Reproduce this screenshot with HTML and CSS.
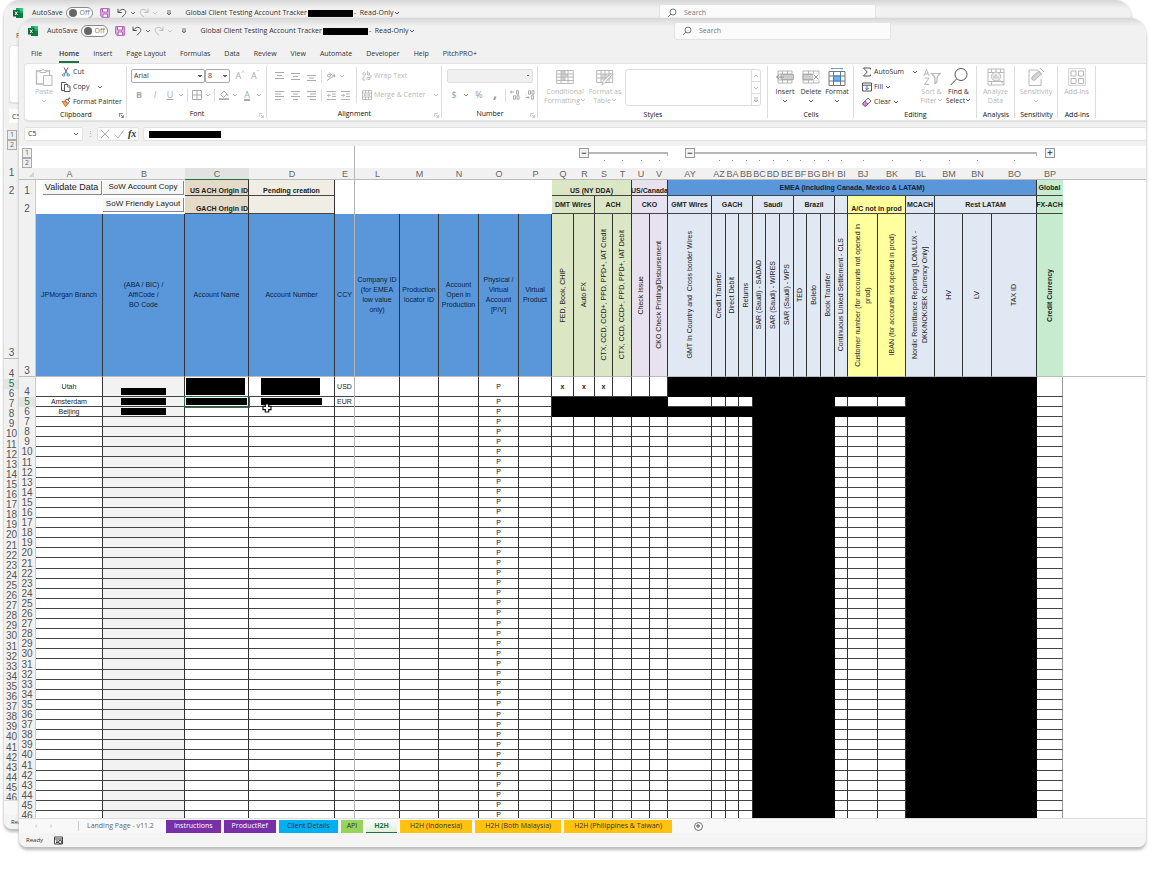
FILE: index.html
```html
<!DOCTYPE html>
<html lang="en">
<head>
<meta charset="utf-8">
<title>Global Client Testing Account Tracker</title>
<link rel="stylesheet" href="styles.css">
</head>
<body>
<svg class="sprite" aria-hidden="true">
  <symbol id="excel" viewBox="0 0 10 10"><path d="M3 0h7v10H3z" fill="#21a366"/><path d="M6.500 0H10v3.300H6.500z" fill="#33c481"/><path d="M3 5h7v5H3z" fill="#107c41"/><path d="M0 2h6.500v6.500H0z" fill="#0b6b38"/><path d="M2 3.500l2.500 3.500M4.500 3.500L2 7" stroke="#fff" stroke-width="1"/></symbol>
  <symbol id="save" viewBox="0 0 10 10"><path d="M.7.7h8.600v8.600H2L.7 8z" fill="#e6b8e8" stroke="#b05ab6"/><path d="M2.500.7h5v3.300h-5z" fill="#fff" stroke="#b05ab6"/><path d="M3 6h4.500v3.300H3z" fill="#fff" stroke="#b05ab6"/></symbol>
  <symbol id="undo" viewBox="0 0 10 10"><path d="M1 .8v3.700h3.800M1.200 4.300C3 2 5 .8 7 1.600c2.400 1 2.200 3.300.8 4.700L5 9.300" fill="none" stroke="currentColor"/></symbol>
  <symbol id="redo" viewBox="0 0 10 10"><path d="M9 .8v3.700H5.200M8.800 4.300C7 2 5 .8 3 1.600.6 2.600.8 4.900 2.200 6.300L5 9.300" fill="none" stroke="currentColor"/></symbol>
  <symbol id="chev" viewBox="0 0 6 6"><path d="M1 2l2 2 2-2" fill="none" stroke="currentColor" stroke-width=".8"/></symbol>
  <symbol id="chevup" viewBox="0 0 6 6"><path d="M1 4l2-2 2 2" fill="none" stroke="currentColor" stroke-width=".8"/></symbol>
  <symbol id="more" viewBox="0 0 6 6"><path d="M1 1h4M1 3l2 2 2-2z" fill="none" stroke="currentColor" stroke-width=".8"/></symbol>
  <symbol id="glass" viewBox="0 0 10 10"><circle cx="6" cy="4" r="3" fill="none" stroke="currentColor"/><path d="M4 6L1 9" stroke="currentColor"/></symbol>
  <symbol id="launch" viewBox="0 0 6 6"><path d="M.5 4.500v-4h4M2 2l3 3M5.300 2.500v2.800H2.500" fill="none" stroke="currentColor" stroke-width=".9"/></symbol>
  <symbol id="paste" viewBox="0 0 18 18"><path d="M5 3H1.500v13H8M11 3h3.500v4" fill="none" stroke="currentColor" stroke-width="1.300"/><path d="M5 4.500V2.500h1.500Q8 0 9.500 2.500H11v2z" fill="#fff" stroke="currentColor"/><path d="M8.500 7.500h8.500v10H8.500z" fill="#fafafa" stroke="currentColor"/></symbol>
  <symbol id="cut" viewBox="0 0 8 10"><path d="M2 .5l3.500 6.500M6 .5L2.500 7" stroke="#666" fill="none"/><circle cx="1.800" cy="8" r="1.200" fill="none" stroke="#3b8fd0"/><circle cx="6.200" cy="8" r="1.200" fill="none" stroke="#3b8fd0"/></symbol>
  <symbol id="copy" viewBox="0 0 10 10"><path d="M3.500 8.500H.5v-8h4l1 1" fill="none" stroke="#555"/><path d="M3.500 2.500h3.500l2 2v5H3.500z" fill="#fff" stroke="#555"/><path d="M6.500 2.500v2.500H9" fill="none" stroke="#555" stroke-width=".7"/></symbol>
  <symbol id="painter" viewBox="0 0 10 10"><path d="M1 4.500l3.500-.5L7 6.500 4.500 9.500z" fill="#f0a35a" stroke="#d9762b"/><path d="M4 3.500l2-1.500L8.500 4.500 7 6.500z" fill="#fff" stroke="#666"/><path d="M6.500 3L9 .7" stroke="#666" stroke-width="1.500"/></symbol>
  <symbol id="border" viewBox="0 0 10 10"><path d="M.5.5h9v9h-9zM5 .5v9M.5 5h9" fill="none" stroke="currentColor"/></symbol>
  <symbol id="fill" viewBox="0 0 10 10"><path d="M1.500 4.500L5 1l3 3-3.500 3.500zM8 4l1.300 2" fill="none" stroke="currentColor"/><path d="M0 8.300h10V10H0z" fill="currentColor"/></symbol>
  <symbol id="atop" viewBox="0 0 9 9"><path d="M0 .5h9M2 3.500h5M0 6.500h9" stroke="currentColor"/></symbol>
  <symbol id="amid" viewBox="0 0 9 9"><path d="M0 1.500h9M2 4.500h5M0 7.500h9" stroke="currentColor"/></symbol>
  <symbol id="abot" viewBox="0 0 9 9"><path d="M0 3.500h9M2 6h5M0 8.500h9" stroke="currentColor"/></symbol>
  <symbol id="aleft" viewBox="0 0 9 9"><path d="M0 .5h9M0 3h6M0 5.500h9M0 8.500h6" stroke="currentColor"/></symbol>
  <symbol id="acen" viewBox="0 0 9 9"><path d="M0 .5h9M2 3h5M0 5.500h9M2 8.500h5" stroke="currentColor"/></symbol>
  <symbol id="aright" viewBox="0 0 9 9"><path d="M0 .5h9M3 3h6M0 5.500h9M3 8.500h6" stroke="currentColor"/></symbol>
  <symbol id="outdent" viewBox="0 0 9 9"><path d="M0 .5h9M5 3h4M5 5.500h4M0 8.500h9M4 4.300H.5M2 2.800L.5 4.300 2 5.800" fill="none" stroke="currentColor" stroke-width=".9"/></symbol>
  <symbol id="indent" viewBox="0 0 9 9"><path d="M0 .5h9M5 3h4M5 5.500h4M0 8.500h9M0 4.300h3.500M2 2.800l1.500 1.500L2 5.800" fill="none" stroke="currentColor" stroke-width=".9"/></symbol>
  <symbol id="orient" viewBox="0 0 10 10"><circle cx="3" cy="4.500" r="1.500" fill="none" stroke="currentColor"/><path d="M3.500 1.500l3 3M1 9.500l8-5.500M9 4l-2.500.3M9 4L8 6.500" fill="none" stroke="currentColor"/></symbol>
  <symbol id="wrap" viewBox="0 0 10 10"><path d="M1 4V2q1.500-1.500 2.500 0v2H1.500M5.500 0v4h2V2h-2M3 6H1v3h2M5 9V6.500h3v2H6M9 4v2.500" fill="none" stroke="currentColor" stroke-width=".9"/></symbol>
  <symbol id="merge" viewBox="0 0 10 10"><path d="M.5.5h9v9h-9zM.5 3h9M.5 7h9M3.500.5V3M6.500.5V3M3.500 7v2.500M6.500 7v2.500M2 5h6M3.500 4L2 5l1.500 1M6.500 4L8 5 6.500 6" fill="none" stroke="currentColor" stroke-width=".9"/></symbol>
  <symbol id="decup" viewBox="0 0 10 10"><path d="M4 2H.5M2 .7L.5 2 2 3.300M6.500.7h2v3.500h-2zM3.500 5.700h2v3.500h-2zM7 5.700h2v3.500H7z" fill="none" stroke="currentColor" stroke-width=".8"/></symbol>
  <symbol id="decdown" viewBox="0 0 10 10"><path d="M3.500.7h2v3.500h-2zM7 .7h2v3.500H7zM1 4v.5M.5 7.500H4M2.700 6.200L4 7.500 2.700 8.800M6.500 5.700h2v3.500h-2z" fill="none" stroke="currentColor" stroke-width=".8"/></symbol>
  <symbol id="cond" viewBox="0 0 18 18"><path d="M5 3h4v10H5zM9 6h3v3H9z" fill="#cfcfcf"/><path d="M.7 2.500h16.600v13H.7zM.7 6h16.600M.7 9h16.600M.7 12.500h16.600M5 2.500v13M12 2.500v13M9 2.500v4M9 9v4" fill="none" stroke="currentColor"/></symbol>
  <symbol id="ftable" viewBox="0 0 18 18"><path d="M5 6h8v6H5z" fill="#d8d8d8"/><path d="M.7 2.500h16v12H.7zM.7 6h16M.7 10h16M5 2.500v12M9 2.500v12M13 2.500v12" fill="none" stroke="currentColor"/><path d="M16.500 6.500L8.500 15l-2.500 2 .8-3.500L15 5.500z" fill="#fff" stroke="currentColor"/></symbol>
  <symbol id="insert" viewBox="0 0 18 18"><path d="M2 3h14v12H2zM2 6h14M2 12h14M6.500 3v12M11.500 3v12" fill="none" stroke="#b4b4b4"/><path d="M5 6.500h12.500v5H5z" fill="#cdcdcd" stroke="#aaa"/><path d="M.5 9H8M3 7L.5 9 3 11" fill="none" stroke="#999"/></symbol>
  <symbol id="delete" viewBox="0 0 18 18"><path d="M1 3h16v12H1zM1 6h16M1 12h16M6.500 3v12M11.500 3v12" fill="none" stroke="#b4b4b4"/><path d="M1 6.500h11v5H1z" fill="#cdcdcd" stroke="#aaa"/><path d="M11 5.500h6.500v7H11z" fill="#fff"/><path d="M11.500 6.500l5 5M16.500 6.500l-5 5" stroke="#999"/></symbol>
  <symbol id="format" viewBox="0 0 18 18"><path d="M1 3.500h16v14H1zM1 8h16M1 13h16M5.500 3.500v14M12.500 3.500v14" fill="none" stroke="#777"/><path d="M5.500 8h7v5h-7z" fill="#6fb3ef" stroke="#2f80c8"/><path d="M3 .5h12M4-.5v2M14-.5v2" stroke="#3b8fd0" stroke-width=".8"/></symbol>
  <symbol id="sum" viewBox="0 0 9 10"><path d="M8 2.500V1H1l3.700 4L1 9h7V7.500" fill="none" stroke="#555"/></symbol>
  <symbol id="filld" viewBox="0 0 10 10"><path d="M.5 1h9v8h-9zM.5 3.200h9" fill="none" stroke="#555"/><path d="M5 3.500v4M3.300 6L5 7.700 6.700 6" fill="none" stroke="#2f80c8"/></symbol>
  <symbol id="eraser" viewBox="0 0 10 10"><path d="M1 6l5-5 3 3-5 5H2.500L1 7.500z" fill="#fff" stroke="#666"/><path d="M1 6l2-2 3 3-2 2H2.500L1 7.500z" fill="#d18ad6" stroke="#a848ae"/></symbol>
  <symbol id="sort" viewBox="0 0 18 18"><path d="M1 8l2.500-6.500L6 8M2 6h3M1.500 10H6l-4.500 6.500H6.200" fill="none" stroke="currentColor"/><path d="M8.500 5.500h8.500l-3 4v4.500l-2 1.500V9.500z" fill="none" stroke="currentColor" stroke-width="1.200"/></symbol>
  <symbol id="find" viewBox="0 0 18 18"><circle cx="11" cy="6.500" r="6" fill="none" stroke="#555"/><path d="M6.500 11L.7 17" stroke="#555"/></symbol>
  <symbol id="analyze" viewBox="0 0 18 18"><path d="M1 1h16v16H1zM1 4.500h16M1 13.500h16M4.500 1v3.500M9 1v3.500M13.500 1v3.500M4.500 13.500V17" fill="none" stroke="currentColor"/><circle cx="9" cy="8.500" r="4.500" fill="#eee" stroke="currentColor"/><path d="M7 10.500v-3M9 10.500V6M11 10.500v-2M12.500 12l3.500 3.500" stroke="currentColor"/></symbol>
  <symbol id="sens" viewBox="0 0 18 18"><path d="M10 2H2v15.500h12V11" fill="none" stroke="currentColor"/><path d="M5 9l7-6 2.500 3-6.500 6q-4 1-3-3z" fill="#d5d5d5" stroke="currentColor"/><path d="M10 1.500l5 5.500M13 0l4 4" stroke="currentColor"/></symbol>
  <symbol id="addins" viewBox="0 0 18 18"><path d="M.7.7h16.600v16.600H.7z" fill="none" stroke="#d0d0d0"/><path d="M3 3h5v5H3zM10.500 3h5v5h-5zM3 10.500h5v5H3zM10.500 10.500h5v5h-5z" fill="none" stroke="currentColor"/></symbol>
  <symbol id="macro" viewBox="0 0 9 9"><path d="M.5 1h8v7h-8zM.5 3h8M2 5h2M2 6.500h2" fill="none" stroke="#444"/><circle cx="6.200" cy="6" r="1.700" fill="#ddd" stroke="#444"/></symbol>
  <symbol id="cursor" viewBox="0 0 10 10"><path d="M3.300 1h3.400v2.300H9v3.400H6.700V9H3.300V6.700H1V3.300h2.300z" fill="#fff" stroke="#111" stroke-width="1.200"/></symbol>
</svg>

<section class="window back">
  <div class="titlebar">
    <svg class="i10"><use href="#excel"/></svg>
    <label class="autosave">AutoSave <input type="checkbox" aria-label="AutoSave back"><span class="toggle">Off</span></label>
    <div class="quick"><svg class="i10"><use href="#save"/></svg><svg class="i10"><use href="#undo"/></svg><svg class="i6"><use href="#chev"/></svg><svg class="i10 dim"><use href="#redo"/></svg><svg class="i6 dim"><use href="#chev"/></svg><svg class="i6 last"><use href="#more"/></svg></div>
    <div class="doc">Global Client Testing Account Tracker<i class="mask"></i>- &nbsp;Read-Only <svg class="i6"><use href="#chev"/></svg></div>
    <label class="search"><svg class="i10"><use href="#glass"/></svg><input type="text" placeholder="Search" aria-label="Search back"></label>
  </div>
  <nav class="tabs"><button>File</button></nav>
  <div class="ribbon"></div>
  <div class="formula"><input class="name" value="C5" aria-label="Name box back"></div>
  <div class="outline"><div class="levels"><button>1</button><button>2</button></div></div>
  <div class="rowlist" id="rowlist"></div>
  <div class="sheets"></div>
  <div class="status">Ready</div>
</section>

<main class="window front">
  <div class="titlebar">
    <svg class="i10"><use href="#excel"/></svg>
    <label class="autosave">AutoSave <input type="checkbox"><span class="toggle">Off</span></label>
    <div class="quick"><svg class="i10"><use href="#save"/></svg><svg class="i10"><use href="#undo"/></svg><svg class="i6"><use href="#chev"/></svg><svg class="i10 dim"><use href="#redo"/></svg><svg class="i6 dim"><use href="#chev"/></svg><svg class="i6 last"><use href="#more"/></svg></div>
    <div class="doc">Global Client Testing Account Tracker<i class="mask"></i>- &nbsp;Read-Only <svg class="i6"><use href="#chev"/></svg></div>
    <label class="search"><svg class="i10"><use href="#glass"/></svg><input type="text" placeholder="Search" aria-label="Search"></label>
  </div>
  <nav class="tabs">
    <button>File</button><button class="on">Home</button><button>Insert</button><button>Page Layout</button><button>Formulas</button><button>Data</button><button>Review</button><button>View</button><button>Automate</button><button>Developer</button><button>Help</button><button>PitchPRO+</button>
  </nav>

  <div class="ribbon">
    <section class="group clipboard">
      <div class="body">
        <button class="big off"><svg class="i18"><use href="#paste"/></svg><span>Paste</span><svg class="i6"><use href="#chev"/></svg></button>
        <div class="stack">
          <button class="small"><svg class="i10"><use href="#cut"/></svg>Cut</button>
          <button class="small"><svg class="i10"><use href="#copy"/></svg>Copy<svg class="i6 far"><use href="#chev"/></svg></button>
          <button class="small"><svg class="i10"><use href="#painter"/></svg>Format Painter</button>
        </div>
      </div>
      <h2>Clipboard</h2><svg class="launch dark"><use href="#launch"/></svg>
    </section>
    <section class="group font">
      <div class="body rows">
        <div class="line">
          <select class="face" aria-label="Font"><option>Arial</option></select><select class="size" aria-label="Font size"><option>8</option></select>
          <button class="tool grow">A<sup>^</sup></button><button class="tool shrink">A<sup>ˇ</sup></button>
        </div>
        <div class="line">
          <button class="tool wide"><b>B</b></button><button class="tool wide"><em>I</em></button><button class="tool"><u>U</u></button><svg class="drop"><use href="#chev"/></svg><i class="rule"></i>
          <button class="tool"><svg class="i10"><use href="#border"/></svg></button><svg class="drop"><use href="#chev"/></svg><i class="rule"></i>
          <button class="tool"><svg class="i10"><use href="#fill"/></svg></button><svg class="drop"><use href="#chev"/></svg>
          <button class="tool wide"><span class="ink">A</span></button><svg class="drop"><use href="#chev"/></svg>
        </div>
      </div>
      <h2>Font</h2><svg class="launch"><use href="#launch"/></svg>
    </section>
    <section class="group align">
      <div class="body">
        <div class="rows">
          <div class="line"><button class="tool wide"><svg class="i9"><use href="#atop"/></svg></button><button class="tool wide"><svg class="i9"><use href="#amid"/></svg></button><button class="tool wide"><svg class="i9"><use href="#abot"/></svg></button><i class="rule"></i><button class="tool"><svg class="i10"><use href="#orient"/></svg></button><svg class="drop"><use href="#chev"/></svg></div>
          <div class="line"><button class="tool wide"><svg class="i9"><use href="#aleft"/></svg></button><button class="tool wide"><svg class="i9"><use href="#acen"/></svg></button><button class="tool wide"><svg class="i9"><use href="#aright"/></svg></button><i class="rule"></i><button class="tool"><svg class="i9"><use href="#outdent"/></svg></button><button class="tool"><svg class="i9"><use href="#indent"/></svg></button></div>
        </div>
        <div class="rows wraps">
          <button class="line off"><svg class="i10"><use href="#wrap"/></svg>Wrap Text</button>
          <button class="line off"><svg class="i10"><use href="#merge"/></svg>Merge &amp; Center<svg class="i6 far"><use href="#chev"/></svg></button>
        </div>
      </div>
      <h2>Alignment</h2><svg class="launch"><use href="#launch"/></svg>
    </section>
    <section class="group number">
      <div class="body rows">
        <div class="line"><select class="numfmt" aria-label="Number format"><option></option></select></div>
        <div class="line signs"><button class="tool">$</button><svg class="drop"><use href="#chev"/></svg><button class="tool wide">%</button><button class="tool wide comma"><b>,</b></button><i class="rule"></i><button class="tool"><svg class="i10"><use href="#decup"/></svg></button><button class="tool wide"><svg class="i10"><use href="#decdown"/></svg></button></div>
      </div>
      <h2>Number</h2><svg class="launch"><use href="#launch"/></svg>
    </section>
    <section class="group styles">
      <div class="body">
        <button class="big off"><svg class="i18"><use href="#cond"/></svg><span>Conditional</span><span>Formatting <svg class="i6"><use href="#chev"/></svg></span></button>
        <button class="big off"><svg class="i18"><use href="#ftable"/></svg><span>Format as</span><span>Table <svg class="i6"><use href="#chev"/></svg></span></button>
        <div class="gallery"><div class="scroll"><button aria-label="Up"><svg class="i6"><use href="#chevup"/></svg></button><button aria-label="Down"><svg class="i6"><use href="#chev"/></svg></button><button aria-label="More"><svg class="i6"><use href="#more"/></svg></button></div></div>
      </div>
      <h2>Styles</h2>
    </section>
    <section class="group cells">
      <div class="body">
        <button class="big"><svg class="i18"><use href="#insert"/></svg><span>Insert</span><svg class="i6"><use href="#chev"/></svg></button>
        <button class="big"><svg class="i18"><use href="#delete"/></svg><span>Delete</span><svg class="i6"><use href="#chev"/></svg></button>
        <button class="big"><svg class="i18"><use href="#format"/></svg><span>Format</span><svg class="i6"><use href="#chev"/></svg></button>
      </div>
      <h2>Cells</h2>
    </section>
    <section class="group editing">
      <div class="body">
        <div class="stack">
          <button class="small"><svg class="i10"><use href="#sum"/></svg>AutoSum<svg class="i6 far"><use href="#chev"/></svg></button>
          <button class="small"><svg class="i10"><use href="#filld"/></svg>Fill <svg class="i6"><use href="#chev"/></svg></button>
          <button class="small"><svg class="i10"><use href="#eraser"/></svg>Clear <svg class="i6"><use href="#chev"/></svg></button>
        </div>
        <button class="big off"><svg class="i18"><use href="#sort"/></svg><span>Sort &amp;</span><span>Filter <svg class="i6"><use href="#chev"/></svg></span></button>
        <button class="big"><svg class="i18"><use href="#find"/></svg><span>Find &amp;</span><span>Select <svg class="i6"><use href="#chev"/></svg></span></button>
      </div>
      <h2>Editing</h2>
    </section>
    <section class="group analysis">
      <div class="body"><button class="big off"><svg class="i18"><use href="#analyze"/></svg><span>Analyze</span><span>Data</span></button></div>
      <h2>Analysis</h2>
    </section>
    <section class="group sens">
      <div class="body"><button class="big off"><svg class="i18"><use href="#sens"/></svg><span>Sensitivity</span><svg class="i6"><use href="#chev"/></svg></button></div>
      <h2>Sensitivity</h2>
    </section>
    <section class="group addins">
      <div class="body"><button class="big off"><svg class="i18"><use href="#addins"/></svg><span>Add-ins</span></button></div>
      <h2>Add-ins</h2>
    </section>
  </div>

  <div class="formula">
    <div class="namebox"><input class="name" value="C5" aria-label="Name box"><svg class="i6"><use href="#chev"/></svg></div>
    <span class="dots">⋮</span>
    <div class="entry">
      <svg class="i10" viewBox="0 0 10 10"><path d="M1 1l8 8M9 1L1 9" stroke="#b5b5b5"/></svg>
      <svg class="i10" viewBox="0 0 10 10"><path d="M.5 5.500L4 9l5.500-7.500" fill="none" stroke="#b5b5b5"/></svg>
      <em>fx</em>
    </div>
    <div class="value"><i class="mask"></i></div>
  </div>

  <div class="sheet">
    <div class="outline">
      <div class="levels"><button>1</button><button>2</button></div>
      <div class="bracket us"><button>−</button><i></i></div>
      <div class="bracket emea"><button>−</button><i></i></div>
      <div class="plus"><button>+</button></div>
      <div class="pips" id="pips"></div>
    </div>
    <table>
      <thead>
        <tr class="letters" id="letters"></tr>
        <tr class="r1">
          <th class="rh">1</th><td class="bare"><button class="form big-form">Validate Data</button></td><td class="bare"><button class="form">SoW Account Copy</button></td>
          <td class="sand right">US ACH Origin ID</td><td class="cream low">Pending creation</td><td class="bare s6"></td>
          <td class="green low s4">US (NY DDA)</td><td class="lilac low s2">US/Canada</td><td class="blue s17">EMEA (including Canada, Mexico &amp; LATAM)</td><td class="mint">Global</td><td class="rest"></td>
        </tr>
        <tr class="r2">
          <th class="rh">2</th><td class="bare"></td><td class="bare"><button class="form">SoW Friendly Layout</button></td>
          <td class="sand right">GACH Origin ID</td><td class="cream"></td><td class="bare s6"></td>
          <td class="green s2">DMT Wires</td><td class="green s2">ACH</td><td class="lilac s2">CKO</td><td class="pale">GMT Wires</td><td class="pale s3">GACH</td><td class="pale s3">Saudi</td><td class="pale s3">Brazil</td><td class="pale"></td><td class="yellow low s2">A/C not in prod</td><td class="pale">MCACH</td><td class="pale s3">Rest LATAM</td><td class="mint">FX-ACH</td><td class="rest"></td>
        </tr>
        <tr class="r3">
          <th class="rh">3</th>
          <td class="blue">JPMorgan Branch</td><td class="blue">(ABA / BIC) /<br>AffiCode /<br>BO Code</td><td class="blue">Account Name</td><td class="blue">Account Number</td><td class="blue freeze">CCY</td>
          <td class="blue">Company ID<br>(for EMEA<br>low value<br>only)</td><td class="blue">Production<br>locator ID</td><td class="blue">Account<br>Open in<br>Production</td><td class="blue">Physical /<br>Virtual<br>Account<br>[P/V]</td><td class="blue">Virtual<br>Product</td>
          <td class="green"><span>FED, Book, CHIP</span></td><td class="green"><span>Auto FX</span></td><td class="green"><span>CTX, CCD, CCD+, PPD, PPD+, IAT Credit</span></td><td class="green"><span>CTX, CCD, CCD+, PPD, PPD+, IAT Debit</span></td>
          <td class="lilac"><span>Check Issue</span></td><td class="lilac"><span>CKO Check Printing/Disbursement</span></td>
          <td class="pale"><span>GMT In Country and &nbsp;Cross border Wires</span></td><td class="pale"><span>Credit Transfer</span></td><td class="pale"><span>Direct Debit</span></td><td class="pale"><span>Returns</span></td>
          <td class="pale"><span>SAR (Saudi) - SADAD</span></td><td class="pale"><span>SAR (Saudi) - WIRES</span></td><td class="pale"><span>SAR (Saudi) - WPS</span></td><td class="pale"><span>TED</span></td><td class="pale"><span>Boleto</span></td><td class="pale"><span>Book Transfer</span></td><td class="pale"><span>Continuous Linked Settlement - CLS</span></td>
          <td class="yellow"><span>Customer number (for accounts not opened in<br>prod)</span></td><td class="yellow"><span>IBAN (for accounts not opened in prod)</span></td>
          <td class="pale"><span>Nordic Remittance Reporting [LON/LUX -<br>DKK/NOK/SEK Currency Only]</span></td><td class="pale"><span>HV</span></td><td class="pale"><span>LV</span></td><td class="pale"><span>TAX ID</span></td><td class="mint"><span><b>Credit Currency</b></span></td><td class="rest"></td>
        </tr>
      </thead>
      <tbody id="rows"></tbody>
    </table>
  </div>

  <div class="sheets">
    <span class="arrows"><i>‹</i><i>›</i></span>
    <button class="plain">Landing Page - v11.2</button><button class="purple">Instructions</button><button class="purple">ProductRef</button><button class="cyan">Client Details</button><button class="lime">API</button><button class="active">H2H</button><button class="gold">H2H (Indonesia)</button><button class="gold">H2H (Both Malaysia)</button><button class="gold">H2H (Philippines &amp; Taiwan)</button>
    <button class="new" aria-label="New sheet"><svg class="i6" viewBox="0 0 6 6"><path d="M1 3h4M3 1v4" stroke="#555"/></svg></button>
  </div>
  <div class="status">Ready <svg class="i9"><use href="#macro"/></svg></div>
</main>
<script src="sheet.js"></script>
</body>
</html>
```
FILE: styles.css
```css
:root {
  --cols: 17px 67px 82px 64px 86px 20px 45px 39px 40px 40px 33px 22px 21px 18px 19px 18px 18px 44px 14px 13px 14px 13px 14px 14px 13px 14px 14px 13px 30px 28px 29px 28px 29px 45px 26px minmax(0, 1fr);
  --rows: 12px 16px 18px 163px 20px 10px 10px repeat(39, minmax(0, 1fr)) 7px;
  --ui: "Open Sans", "Noto Sans", sans-serif;
  --grid: "Liberation Sans", Arial, sans-serif;
}
* { box-sizing: border-box; }
body {
  margin: 0; padding: 18px 4px 26px 19px; height: 100vh; overflow: hidden;
  display: flex; background: #fff; color: #333;
  font: 7px/10px var(--ui);
}
button, input, select { font: inherit; color: inherit; background: none; border: 0; padding: 0; margin: 0; white-space: nowrap; }
svg { display: block; flex: none; overflow: visible; }
.sprite { position: absolute; width: 0; height: 0; }
.i6 { width: 6px; height: 6px; }
.i9 { width: 9px; height: 9px; }
.i10 { width: 10px; height: 10px; }
.i18 { width: 18px; height: 18px; }
.mask { background: #000; }

.window {
  display: flex; flex-direction: column; overflow: hidden;
  background: #f1f1f1; border-radius: 16px 16px 8px 8px;
  box-shadow: 0 3px 3px #bcbcbc, 0 0 2px #d0d0d0;
}
.front { flex: 1; min-width: 0; position: relative; }
.back { position: absolute; top: 0; left: 4px; right: 19px; bottom: 44px; }

.titlebar {
  flex: none; height: 26px; padding: 0 0 0 9px; display: flex; align-items: center;
  background: linear-gradient(#d6d6d6, #f1f1f1 8px);
}
.autosave { display: flex; align-items: center; gap: 3px; margin-left: 9px; }
.autosave input { position: absolute; opacity: 0; }
.toggle {
  display: flex; align-items: center; gap: 3px; width: 27px; height: 12px; padding-left: 2px;
  border: 1px solid #888; border-radius: 6px; background: #fff; color: #777;
}
.toggle::before { content: ""; width: 8px; height: 8px; border-radius: 50%; background: #666; }
.quick { display: flex; align-items: center; gap: 3px; margin-left: 7px; color: #555; }
.quick svg:nth-child(2) { margin-left: 4px; }
.quick .dim { color: #bbb; }
.quick .last { margin-left: 5px; }
.doc { display: flex; align-items: center; gap: 1px; margin-left: 14px; flex: 1; white-space: nowrap; }
.doc .mask { width: 45px; height: 7px; }
.search {
  flex: none; width: 217px; height: 18px; margin-right: 255px; padding-left: 7px;
  display: flex; align-items: center; gap: 7px; background: #fbfbfb; border: 1px solid #e2e2e2; border-radius: 2px; color: #777;
}
.search input { flex: 1; outline: 0; }
.search input::placeholder { color: #777; opacity: 1; }

.tabs { flex: none; height: 19px; padding-left: 12px; display: flex; align-items: flex-end; gap: 14px; }
.tabs button { height: 16px; border-bottom: 2px solid transparent; line-height: 14px; }
.tabs .on { font-weight: 600; border-color: #1e7145; }
.tabs button:first-child { margin-right: 3px; }

.ribbon {
  flex: none; height: 58px; margin-left: 5px; display: flex; background: #fff;
  border: 1px solid #e4e4e4; border-right: 0; border-radius: 4px 0 0 4px; box-shadow: 0 1px 1px #ddd;
}
.group { position: relative; flex: none; display: flex; flex-direction: column; }
.group::after { content: ""; position: absolute; right: 0; top: 2px; bottom: 2px; width: 1px; background: #dcdcdc; }
.group h2 { margin: 0; font: 400 7px/12px var(--ui); text-align: center; color: #111; }
.launch { position: absolute; right: 3px; bottom: 2px; width: 5px; height: 5px; color: #bbb; }
.launch.dark { color: #555; }
.body { height: 45px; display: flex; }
.clipboard { width: 102px; }
.font { width: 140px; color: #aaa; }
.align { width: 175px; color: #ababab; }
.number { width: 96px; color: #999; }
.styles { width: 230px; }
.cells { width: 86px; }
.editing { width: 123px; }
.analysis { width: 38px; }
.sens { width: 43px; }
.addins { width: 38px; }
.big {
  display: flex; flex-direction: column; align-items: center; padding-top: 4px; line-height: 9px; width: 26px; height: 45px;
}
.big > svg:last-child { margin-top: 2px; }
.big span { display: flex; align-items: center; }
.big svg:first-child { margin-bottom: 1px; }
.off { color: #b8b8b8; }
.clipboard .body { padding-left: 6px; gap: 4px; }
.stack { display: flex; flex-direction: column; }
.small { height: 15px; display: flex; align-items: center; gap: 2px; }
.far { margin-left: 6px; }
.rows { display: flex; flex-direction: column; gap: 5px; padding-top: 5px; }
.line { height: 14px; display: flex; align-items: center; }
.tool { width: 14px; height: 12px; display: flex; align-items: center; justify-content: center; font-size: 9px; }
.wide { width: 16px; }
.drop { width: 8px; height: 6px; }
.rule { width: 1px; height: 13px; margin: 0 2px; background: #dedede; }
.ink { line-height: 9px; border-bottom: 2px solid #aaa; }
.font .body { padding-left: 4px; }
select {
  appearance: none; height: 14px; padding-left: 2px; border: 1px solid #aaa; border-radius: 2px; color: #333; outline: 0;
  background: linear-gradient(45deg, transparent 50%, #666 50%) right 4px center / 2px 2px no-repeat, linear-gradient(-45deg, transparent 50%, #666 50%) right 2px center / 2px 2px no-repeat;
}
.face { width: 74px; }
.size { width: 25px; }
.grow { margin-left: 2px; width: 16px; }
.tool sup { font-size: 6px; line-height: 5px; align-self: flex-start; }
.align .body { padding-left: 4px; gap: 4px; }
.wraps { padding-left: 6px; position: relative; }
.wraps::before { content: ""; position: absolute; left: 0; top: 3px; bottom: 5px; width: 1px; background: #dedede; }
.wraps .line { gap: 2px; }
.number .body { padding-left: 5px; }
.numfmt { width: 86px; background-color: #f0f0f0; border-color: #ddd; }
.signs .drop { width: 10px; color: #666; }
.comma { font-size: 14px; line-height: 8px; align-items: flex-start; }
.styles .body { padding-left: 5px; }
.styles .big { width: 44px; }
.styles .big + .big { width: 36px; }
.gallery { width: 136px; height: 37px; margin-top: 5px; margin-left: 2px; border: 1px solid #ddd; border-radius: 3px; display: flex; justify-content: flex-end; }
.scroll { display: flex; flex-direction: column; width: 9px; border-left: 1px solid #ddd; color: #aaa; }
.scroll button { flex: 1; display: flex; align-items: center; justify-content: center; }
.scroll button + button { border-top: 1px solid #ddd; }
.cells .body { padding-left: 4px; }
.editing .body { padding-left: 8px; }
.editing .stack { width: 56px; }
.editing .big { width: 27px; }
.analysis .big, .addins .big { width: 37px; }
.sens .big { width: 42px; }

.formula { flex: none; height: 14px; margin: 6px 0 5px 5px; display: flex; align-items: center; }
.namebox, .entry, .value { height: 14px; background: #fff; border: 1px solid #e2e2e2; border-radius: 2px; display: flex; align-items: center; }
.namebox { width: 59px; padding: 0 3px; }
.name { flex: 1; min-width: 0; outline: 0; }
.back .formula .name { flex: none; width: 59px; height: 14px; padding-left: 3px; background: #fff; }
.dots { width: 14px; text-align: center; color: #999; }
.entry { width: 42px; padding: 0 2px; gap: 4px; justify-content: space-between; }
.entry em { font: italic bold 10px/10px "Liberation Serif", serif; }
.value { flex: 1; margin-left: 4px; padding-left: 5px; border-right: 0; }
.value .mask { width: 72px; height: 7px; }

.sheet { flex: 1; min-height: 0; display: flex; flex-direction: column; background: #fff; position: relative; }
.sheet::after { content: ""; position: absolute; left: 335px; top: 0; bottom: 0; width: 1px; background: #b5b5b5; }
.outline { flex: none; height: 22px; display: grid; grid-template-columns: var(--cols); grid-template-rows: 13px 9px; }
.levels { grid-row: 1 / 3; grid-column: 1; padding: 2px 0 0 3px; display: flex; flex-direction: column; }
.levels button { flex: none; width: 10px; height: 10px; border: 1px solid #aaa; background: #eee; font-size: 7px; line-height: 8px; color: #666; }
.bracket, .plus { grid-row: 1; display: flex; align-items: center; }
.us { grid-column: 13 / 18; padding-left: 5px; }
.emea { grid-column: 18 / 35; padding-left: 17px; }
.bracket button, .plus button { flex: none; width: 10px; height: 10px; border: 1px solid #999; background: #f4f4f4; font: 700 9px/8px var(--grid); color: #444; }
.bracket i { flex: 1; height: 4px; margin-top: 2px; border: solid #b5b5b5; border-width: 2px 1px 0 0; }
.plus { grid-column: 35; justify-content: center; }
.pips { grid-row: 2; grid-column: 1 / -1; display: grid; grid-template-columns: var(--cols); }
.pips i { width: 1px; height: 1px; margin: 1px auto; background: #888; }

table { flex: 1; min-height: 0; display: grid; grid-template-columns: var(--cols); grid-template-rows: var(--rows); font-family: var(--grid); }
thead, tbody, tr { display: contents; }
th, td { min-width: 0; min-height: 0; padding: 0; font-weight: 400; }
td {
  display: flex; align-items: center; justify-content: center; text-align: center; white-space: nowrap;
  border-right: 1px solid #333; border-bottom: 1px solid #444; color: #222;
}
.letters th { background: #f1f1f1; border-bottom: 1px solid #bbb; font-size: 9px; line-height: 12px; color: #666; display: flex; justify-content: center; white-space: nowrap; }
.letters .sel { background: #e2e2e2; border-bottom-color: #217346; }
.letters .corner { align-items: flex-end; justify-content: flex-end; }
.corner::after { content: ""; width: 6px; height: 6px; margin: 2px; background: linear-gradient(135deg, transparent 50%, #d5d5d5 50%); }
.rh {
  background: #f1f1f1; border-right: 1px solid #ccc; color: #555; font: 10px/10px var(--grid);
  display: flex; align-items: flex-end; justify-content: center; overflow: hidden;
}
.rh.cut { align-items: flex-start; }
.rh.sel { background: #e2e6e2; color: #217346; }
.r1 td, .r2 td { font-weight: 700; }
.r1 .bare, .r2 .bare, .rest, .r1 .rest, .r2 .rest { border-color: transparent; }
.r3 td { line-height: 10px; }
.r3 td, .r3 .rh { border-bottom: 1px solid #bbb; }
.r3 span { writing-mode: vertical-rl; transform: rotate(180deg); }
.r1 .low, .r2 .low { align-items: flex-end; line-height: 8px; }
.right { justify-content: flex-end; align-items: flex-end; line-height: 8px; }
.s2 { grid-column: span 2; } .s3 { grid-column: span 3; } .s4 { grid-column: span 4; } .s6 { grid-column: span 6; } .s17 { grid-column: span 17; }
.sand { background: #e3dac8; } .cream { background: #f0ede4; } .green { background: #dbe6c4; } .lilac { background: #e8e1ef; }
.blue { background: #5a97da; color: #0c2340; } .pale { background: #e0e8f3; } .yellow { background: #ffff9e; } .mint { background: #c6ebcf; }
.r3 .freeze { border-right-color: #aaa; }
.r1 .mint, .r2 .mint, .r3 .mint { border-right-color: #c6ebcf; }
.form { width: 100%; height: 14px; background: #f6f6f6; border-right: 1px solid #888; border-bottom: 1px solid #888; font: 8px/12px var(--grid); }
.big-form { width: 59px; margin-left: 6px; font-size: 9px; }
#rows td { position: relative; line-height: 8px; }
#rows .shade { background: #f2f2f2; }
#rows .dark { background: #000; border-color: #000; }
#rows .rest { border-color: transparent; }
#rows .edge { border-right-color: #999; }
#rows .cut { border-bottom: 0; overflow: hidden; align-items: flex-start; }
#rows .pick { outline: 1px solid #217346; z-index: 1; }
.hide { background: #000; width: 61px; height: 7px; }
.hide.code { width: 45px; }
.hide.block { width: 59px; height: 17px; }
.low-code { align-self: flex-end; margin-bottom: 1px; }
.left { margin-right: 2px; }
.pointer { position: absolute; left: 13px; top: 6px; width: 10px; height: 10px; z-index: 2; }

.back .rowlist { flex: 1; min-height: 0; width: 17px; display: grid; grid-template-rows: var(--rows); border-right: 1px solid #ccc; }
.rowlist .three { border-bottom: 1px solid #bbb; }

.sheets { flex: none; height: 15px; background: #f8f8f8; display: flex; align-items: center; gap: 3px; border-top: 1px solid #ddd; }
.arrows { width: 60px; height: 10px; padding-left: 16px; display: flex; gap: 13px; line-height: 9px; color: #aaa; border-right: 1px solid #ccc; }
.arrows i { font-style: normal; }
.sheets button { height: 13px; padding: 0 8px; }
.sheets .plain { color: #666; padding: 0 9px 0 5px; }
.purple { background: #7730a8; color: #fff; }
.cyan { background: #00b0f0; }
.lime { background: #98d35c; }
.sheets .lime { padding: 0 6px; }
.sheets .active { background: linear-gradient(#fff, #dff0d8); color: #217346; font-weight: 700; border-bottom: 1px solid #217346; }
.sheets .gold { background: #ffc20e; padding: 0 10px; }
.sheets .new { width: 9px; height: 9px; padding: 0; margin-left: 19px; border: 1px solid #777; border-radius: 50%; display: flex; align-items: center; justify-content: center; }
.status { flex: none; height: 14px; padding-left: 7px; display: flex; align-items: center; gap: 11px; background: #f4f4f4; font-size: 6px; }
```
FILE: sheet.js
```js
const columns = "A B C D E L M N O P Q R S T U V AY AZ BA BB BC BD BE BF BG BH BI BJ BK BL BM BN BO BP".split(" ");
const at = name => columns.indexOf(name);
const between = (i, from, to) => i >= at(from) && i <= at(to);

// Column letters
document.getElementById("letters").innerHTML = '<th class="corner"></th>' +
  columns.map(c => `<th class="${c === "C" ? "sel" : ""}">${c}</th>`).join("") + "<th></th>";

// Outline dots above the grouped columns
document.getElementById("pips").innerHTML = columns
  .map((c, i) => (between(i, "S", "V") || between(i, "AZ", "BO")) ? `<i style="grid-column:${i + 2}"></i>` : "").join("");

const known = {
  4: { A: "Utah", E: "USD", Q: "<b>x</b>", R: "<b>x</b>", S: "<b>x</b>",
    B: '<i class="hide code low-code"></i>', C: '<i class="hide block left"></i>', D: '<i class="hide block left"></i>' },
  5: { A: "Amsterdam", E: "EUR", B: '<i class="hide code"></i>', C: '<i class="hide"></i>',
    D: '<i class="hide"></i><svg class="pointer"><use href="#cursor"/></svg>' },
  6: { A: "Beijing", B: '<i class="hide code"></i>' }
};

// Cells that do not apply to an account are blacked out
function isDark(row, i) {
  if (between(i, "BL", "BO") || between(i, "BC", "BH")) return true;
  if (row === 4) return between(i, "AY", "BO");
  if (row === 5) return between(i, "Q", "V");
  return row === 6 && between(i, "Q", "BO");
}

let html = "";
for (let row = 4; row <= 46; row++) {
  const cut = row === 46 ? " cut" : "";
  html += `<tr><th class="rh${row === 5 ? " sel" : ""}${cut}">${row}</th>`;
  columns.forEach((c, i) => {
    const text = (known[row] && known[row][c]) || (c === "O" ? "P" : "");
    const cls = [isDark(row, i) ? "dark" : "", c === "B" ? "shade" : "", c === "E" || c === "BP" ? "edge" : "",
      row === 5 && c === "C" ? "pick" : ""].filter(Boolean).join(" ");
    html += `<td class="${cls}${cut}">${text}</td>`;
  });
  html += '<td class="rest"></td></tr>';
}
document.getElementById("rows").innerHTML = html;

let list = "<div></div>";
for (let row = 1; row <= 46; row++) {
  list += `<div class="rh${row === 3 ? " three" : ""}${row === 5 ? " sel" : ""}${row === 46 ? " cut" : ""}">${row}</div>`;
}
document.getElementById("rowlist").innerHTML = list;
```
